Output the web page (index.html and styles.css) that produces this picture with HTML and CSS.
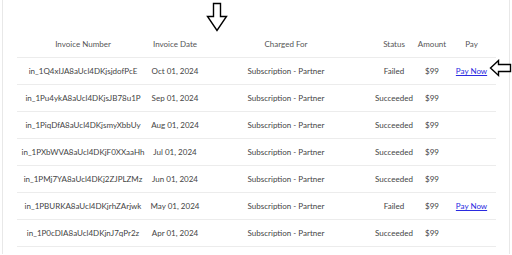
FILE: index.html
```html
<!DOCTYPE html>
<html lang="en">
<head>
    <meta charset="UTF-8">
    <meta name="viewport" content="width=device-width, initial-scale=1.0">
    <title>Invoices</title>
    <link rel="stylesheet" href="styles.css">
</head>
<body>

    <div class="card">
        <table class="invoices">
            <colgroup>
                <col class="col-number">
                <col class="col-date">
                <col class="col-charged">
                <col class="col-status">
                <col class="col-amount">
                <col class="col-pay">
            </colgroup>
            <thead>
                <tr>
                    <th>Invoice Number</th>
                    <th>Invoice Date</th>
                    <th>Charged For</th>
                    <th>Status</th>
                    <th>Amount</th>
                    <th>Pay</th>
                </tr>
            </thead>
            <tbody>
                <tr>
                    <td>in_1Q4xIJA8aUcl4DKjsjdofPcE</td>
                    <td>Oct 01, 2024</td>
                    <td>Subscription - Partner</td>
                    <td>Failed</td>
                    <td>$99</td>
                    <td><a href="#">Pay Now</a></td>
                </tr>
                <tr>
                    <td>in_1Pu4ykA8aUcl4DKjsJB78u1P</td>
                    <td>Sep 01, 2024</td>
                    <td>Subscription - Partner</td>
                    <td>Succeeded</td>
                    <td>$99</td>
                    <td></td>
                </tr>
                <tr>
                    <td>in_1PiqDfA8aUcl4DKjsmyXbbUy</td>
                    <td>Aug 01, 2024</td>
                    <td>Subscription - Partner</td>
                    <td>Succeeded</td>
                    <td>$99</td>
                    <td></td>
                </tr>
                <tr>
                    <td>in_1PXbWVA8aUcl4DKjF0XXaaHh</td>
                    <td>Jul 01, 2024</td>
                    <td>Subscription - Partner</td>
                    <td>Succeeded</td>
                    <td>$99</td>
                    <td></td>
                </tr>
                <tr>
                    <td>in_1PMj7YA8aUcl4DKj2ZJPLZMz</td>
                    <td>Jun 01, 2024</td>
                    <td>Subscription - Partner</td>
                    <td>Succeeded</td>
                    <td>$99</td>
                    <td></td>
                </tr>
                <tr>
                    <td>in_1PBURKA8aUcl4DKjrhZArjwk</td>
                    <td>May 01, 2024</td>
                    <td>Subscription - Partner</td>
                    <td>Failed</td>
                    <td>$99</td>
                    <td><a href="#">Pay Now</a></td>
                </tr>
                <tr>
                    <td>in_1P0cDIA8aUcl4DKjnJ7qPr2z</td>
                    <td>Apr 01, 2024</td>
                    <td>Subscription - Partner</td>
                    <td>Succeeded</td>
                    <td>$99</td>
                    <td></td>
                </tr>
            </tbody>
        </table>
    </div>

    <!-- annotation arrows drawn over the screenshot -->
    <svg class="arrow arrow-down" width="24" height="32" viewBox="0 0 24 32">
        <polygon points="8.5,1.5 15.5,1.5 15.5,14.5 21.5,14.5 12,28.5 2.5,14.5 8.5,14.5" />
    </svg>
    <svg class="arrow arrow-left" width="24" height="20" viewBox="0 0 24 20">
        <polygon points="1.5,9 9.5,1.5 9.5,5.5 21.5,5.5 21.5,12.5 9.5,12.5 9.5,16.5" />
    </svg>

</body>
</html>
```

FILE: styles.css
```css
body {
    font-family: 'Lato', 'Liberation Sans', sans-serif;
    margin: 0;
    padding: 0;
    background-color: #fff;
    overflow: hidden;
}

.card {
    margin: 0 2px;
    padding: 31px 13px 7px 14px;
    border-left: 1px solid #e8e8e8;
    border-right: 1px solid #e8e8e8;
    background-color: #fff;
}

.invoices {
    width: 479px;
    table-layout: fixed;
    border-collapse: separate;
    border-spacing: 0;
    font-size: 8px;
}

.col-number { width: 132px; }
.col-date { width: 52px; }
.col-charged { width: 170px; }
.col-status { width: 46px; }
.col-amount { width: 30px; }
.col-pay { width: 49px; }

.invoices th,
.invoices td {
    height: 26px;
    padding: 0;
    text-align: center;
    white-space: nowrap;
    border-bottom: 1px solid #ececec;
    box-sizing: content-box;
}

.invoices th {
    font-weight: 400;
    color: #555;
}

.invoices td {
    color: #444;
}

.invoices a {
    color: #2a2ae0;
    text-decoration: underline;
}

.arrow {
    position: absolute;
}

.arrow polygon {
    fill: #fff;
    stroke: #000;
    stroke-width: 1.4;
}

.arrow-down {
    left: 205px;
    top: 2px;
}

.arrow-left {
    left: 489px;
    top: 59px;
}
```
